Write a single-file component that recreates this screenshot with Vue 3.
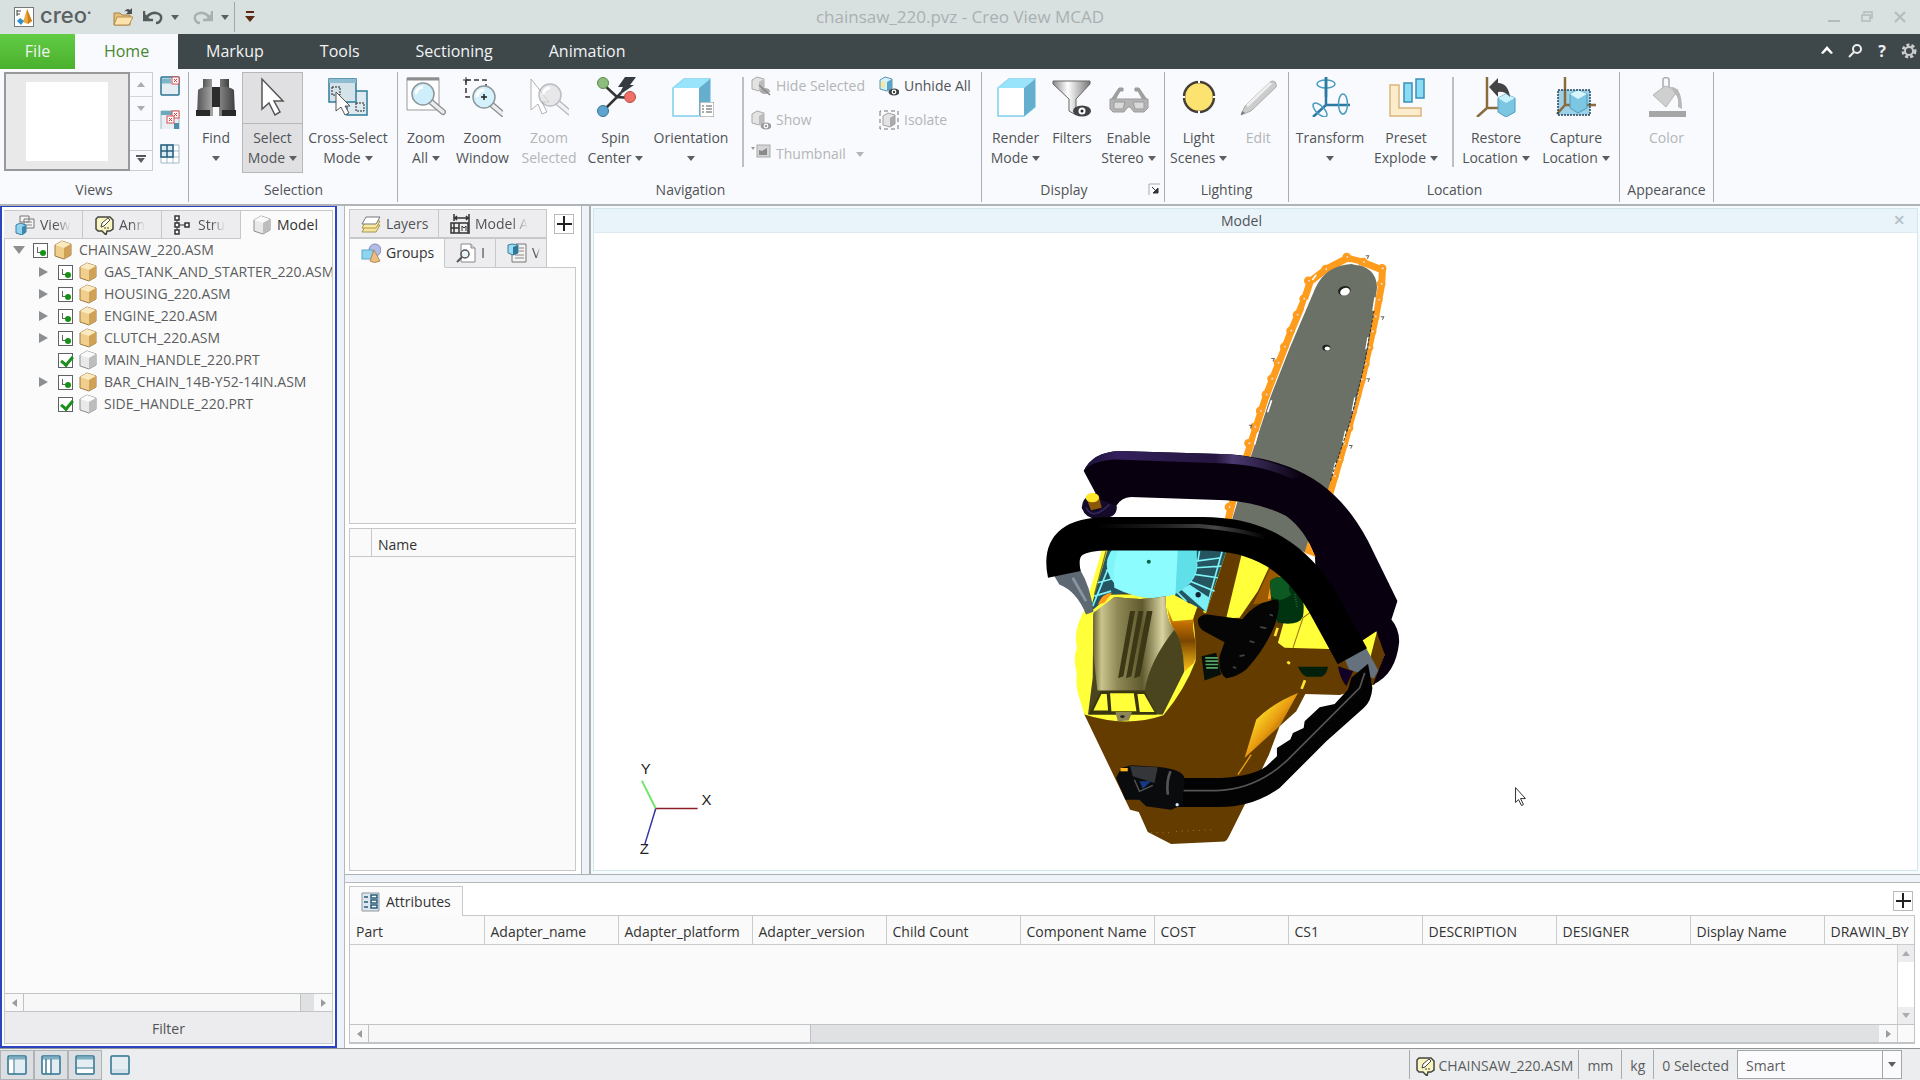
<script setup>
import { ref } from 'vue'

const lens = (x, y, r, fill) =>
  `<path d="M${x + r * 0.6} ${y + r * 0.6}L${x + r + 9} ${y + r + 7}" stroke="#8b8f93" stroke-width="6" stroke-linecap="round"/><path d="M${x + r * 0.7} ${y + r * 0.7}L${x + r + 9} ${y + r + 7}" stroke="#eceded" stroke-width="3.5" stroke-linecap="round"/><circle cx="${x}" cy="${y}" r="${r}" fill="${fill}" stroke="#8d979c" stroke-width="1.5"/><path d="M${x - r + 4} ${y}a${r - 4} ${r - 4} 0 0 1 ${r - 4} ${-r + 4}" stroke="#fff" stroke-width="3" fill="none"/>`
const eye = (c) => `<ellipse cx="15" cy="16" rx="5.5" ry="3.5" fill="${c}"/><circle cx="15" cy="16" r="2.4" fill="#fff"/><circle cx="15" cy="16" r="1.2" fill="${c}"/>`
const box = (a, b, c, s) =>
  `<path d="M2 5L9 1l9 3v11l-7 4-9-3z" fill="${a}" stroke="${s}"/><path d="M2 5l9 3 7-4-9-3z" fill="${b}"/><path d="M11 8l7-4v11l-7 4z" fill="${c}"/>`
const tinyBox = (a, c, s) =>
  `<path d="M1 4l5-3 7 2v9l-5 3-7-2z" fill="${a}" stroke="${s}"/><path d="M8 6l5-3v9l-5 3z" fill="${c}"/>`
const win = (inner) =>
  `<rect x="1" y="1" width="18" height="18" rx="1" fill="#e4edf2" stroke="#2b7391" stroke-width="1.5"/>${inner}`

const icons = {
  find: '<defs><linearGradient id="bn"><stop stop-color="#555"/><stop offset=".4" stop-color="#a5a5a5"/><stop offset="1" stop-color="#3f3f3f"/></linearGradient></defs><path d="M7 2h9v10H7zM24 2h9v10h-9z" fill="url(#bn)"/><path d="M2 13q5-4 15-3v29H1zM38 13q-5-4-15-3v29h16z" fill="url(#bn)"/><path d="M16 10h8v20h-8z" fill="#2c2c2c"/><path d="M0 33h14v6H0zM26 33h14v6H26z" fill="#292929"/>',
  select: '<path d="M9 2v30l7-6 6 12 5-3-6-11h9z" fill="#fff" stroke="#555" stroke-width="1.5"/>',
  cross: '<rect x="19" y="14" width="20" height="24" fill="#dfe9f0" stroke="#2e7c9a" stroke-width="1.5"/><rect x="1" y="2" width="27" height="23" fill="#d4e2ea" stroke="#2e7c9a" stroke-width="1.5"/><path d="M1 4h27" stroke="#8fbdd0" stroke-width="4"/><rect x="4" y="10" width="8" height="8" fill="none" stroke="#222" stroke-dasharray="2 1"/><rect x="28" y="26" width="8" height="8" fill="none" stroke="#222" stroke-dasharray="2 1"/><path d="M8 15v19l5-4 4 8 4-2-4-7h5z" fill="#fff" stroke="#555"/>',
  zoomAll: '<path d="M1 1h32v32H1z" fill="#fff" stroke="#999"/><path d="M1 2h32" stroke="#8d8d8d" stroke-width="3"/>' + lens(17, 17, 11, '#cdeefa'),
  zoomWindow: '<path d="M3 3h20v17M3 3v17h20" fill="none" stroke="#333" stroke-width="1.5" stroke-dasharray="5 3"/><path d="M0 3h6M3 0v6" stroke="#333"/>' + lens(21, 20, 11, '#d5f2fc') + '<path d="M18 20h6M21 17v6" stroke="#222" stroke-width="1.5"/>',
  zoomSelected: '<path d="M2 2v31l7-6 4 10 5-2-5-10h7z" fill="#fff" stroke="#b3b3b3"/><g opacity=".6">' + lens(21, 18, 11, '#dcdcdc') + '</g>',
  spin: '<path d="M7 7l14 13 14 1M21 20L7 34M21 20l4-4" stroke="#333" stroke-width="2.5" fill="none"/><circle cx="7" cy="6" r="5.5" fill="#8cbd7c" stroke="#5c8a4e"/><circle cx="7" cy="34" r="5.5" fill="#5fa3cf" stroke="#3b7499"/><circle cx="34" cy="20" r="5.5" fill="#ee7066" stroke="#b64c44"/><path d="M29 0h11l-6 8h4L22 19l5-9h-5z" fill="#333a40"/>',
  cube: '<path d="M2 11L13 2h26v28l-11 9H2z" fill="#fff" stroke="#7fd0ee" stroke-width="1.5"/><path d="M2 11L13 2h26l-11 9z" fill="#9ae4fb"/><path d="M28 11L39 2v28l-11 9z" fill="#65aecd"/>',
  filter: '<defs><linearGradient id="fn"><stop stop-color="#8a8a8a"/><stop offset=".4" stop-color="#fff"/><stop offset="1" stop-color="#777"/></linearGradient></defs><path d="M1 4h37v3L24 22v16l-7-4V22L1 7z" fill="url(#fn)" stroke="#666"/><ellipse cx="30" cy="34" rx="9" ry="5.5" fill="#3f4447"/><circle cx="30" cy="34" r="3.5" fill="#fff"/><circle cx="30" cy="34" r="1.5" fill="#222"/>',
  glasses: '<path d="M2 23L10 11h4v3h-3l-5 9M38 23l-8-12h-4v3h3l5 9" fill="#a0a0a0" stroke="#999"/><path d="M1 22h38v9l-4 4H25l-4-5h-2l-4 5H4l-3-3z" fill="#b4b4b4" stroke="#9b9b9b"/><path d="M5 25h11l-2 7H5zM24 25h11v7h-9z" fill="#d9d9d9" stroke="#999"/>',
  light: '<circle cx="20" cy="20" r="15" fill="#fce36f" stroke="#463f38" stroke-width="2.5"/><path d="M20 3v3M20 34v3M3 20h3M34 20h3" stroke="#fff" stroke-width="2"/>',
  pencil: '<path d="M3 38l4-9L32 5q3-2 5 0t1 5L13 34z" fill="#ccc" stroke="#aaa"/><path d="M9 29L33 6" stroke="#eee" stroke-width="3"/><path d="M3 38l1-4 3 2z" fill="#777"/>',
  transform: '<path d="M16 0v28h24M16 28L3 40" stroke="#2c7aa2" stroke-width="2.5" fill="none"/><ellipse cx="16" cy="7" rx="9" ry="4" fill="none" stroke="#4a9cc0" stroke-width="1.5"/><ellipse cx="33" cy="27" rx="4.5" ry="10" fill="none" stroke="#4a9cc0" stroke-width="1.5"/><ellipse cx="10" cy="33" rx="4" ry="9" transform="rotate(-45 10 33)" fill="none" stroke="#4a9cc0" stroke-width="1.5"/><path d="M16 0v20" stroke="#2c7aa2" stroke-width="2.5"/>',
  explode: '<path d="M4 8h9v23h22v8H4z" fill="#fdeccb" stroke="#dcb67c" stroke-width="1.5"/><path d="M18 6h8v19h-8zM30 2h8v19h-8z" fill="#8adcf5" stroke="#3d8fb5" stroke-width="1.5"/>',
  restore: '<path d="M11 0v31h20M11 31L1 40" stroke="#8b6b3c" stroke-width="2.5" fill="none"/><path d="M22 21l8-4 9 4v14l-9 5-8-5z" fill="#7cc6e2" stroke="#4b9cbd"/><path d="M22 21l8-4 9 4-9 5z" fill="#c9f1fc"/><path d="M13 10l9-9v5q10 0 12 14-5-6-12-5v5z" fill="#424446"/>',
  capture: '<path d="M2 13h32v25H2z" fill="#9dd1e8"/><path d="M9 0v28h31M9 28L1 37" stroke="#8b6b3c" stroke-width="2.5" fill="none"/><path d="M14 17l8-4 9 4v14l-9 5-8-5z" fill="#7cc6e2" stroke="#4b9cbd"/><path d="M14 17l8-4 9 4-9 5z" fill="#d7f6fe"/><path d="M2 13h32v25H2z" fill="none" stroke="#26465c" stroke-width="1.5" stroke-dasharray="2 1"/>',
  bucket: '<path d="M16 12V2q3-3 6 0v10" fill="none" stroke="#aaa" stroke-width="1.5"/><path d="M6 18L18 9l13 4-12 17z" fill="#cfcfcf" stroke="#b5b5b5"/><path d="M24 10q11 0 11 22l-4-2q1-10-3-13z" fill="#b8b8b8"/><path d="M2 34h37v6H2z" fill="#a6a6a6"/>',
  hide: tinyBox('#e3e3e3', '#bbb', '#a9a9a9') + '<ellipse cx="14" cy="15" rx="5" ry="3" fill="#aaa"/><path d="M8 9l11 10" stroke="#888" stroke-width="1.5"/>',
  show: tinyBox('#e3e3e3', '#bbb', '#a9a9a9') + eye('#999'),
  unhide: tinyBox('#d6f1fb', '#5aa5c6', '#5593ae') + '<path d="M2 5l4 1v6l-4-1z" fill="#f7e69b"/>' + eye('#3d4246'),
  isolate: '<path d="M1 4V1h18v18H1z" fill="none" stroke="#777" stroke-dasharray="4 3"/><path d="M4 6l5-3 7 2v9l-5 3-7-2z" fill="#e3e3e3" stroke="#a0a0a0"/><path d="M11 8l5-3v9l-5 3z" fill="#aaa"/>',
  thumb: '<path d="M0 3h4L2 6z" fill="#999"/><rect x="6" y="1" width="13" height="12" fill="#d5d5d5" stroke="#aaa"/><path d="M8 11V6l3 1 5-3v7z" fill="#8a8a8a"/>',
  winX: win('<path d="M2 5h9" stroke="#7fb5c9" stroke-width="5"/><rect x="12" y="1" width="7" height="7" fill="#fff" stroke="#d64d4d"/><path d="M14 3l3 3m0-3l-3 3" stroke="#d33"/>'),
  winXX: '<path d="M1 19V1h18v18" fill="#e8eef2" stroke="#9bbccb"/><path d="M1 3h11" stroke="#6da7bd" stroke-width="4"/><path d="M14 19v-6h5v6" fill="#4d8fa9"/><rect x="12" y="1" width="7" height="7" fill="#fff" stroke="#d64d4d"/><path d="M14 3l3 3m0-3l-3 3" stroke="#d33"/><rect x="7" y="6" width="7" height="7" fill="#fff" stroke="#d64d4d"/><path d="M9 8l3 3m0-3l-3 3" stroke="#d33"/>',
  grid: '<path d="M1 1h18v18H1zM1 13h18M13 1v18M7 1v18M1 7h18" fill="#fff" stroke="#9fb9c6"/><path d="M1 1h12v12H1zM7 1v12M1 7h12" fill="#d9eaf2" stroke="#245f7c" stroke-width="1.5"/>',
  views: '<path d="M5 1h9v6H5zM9 4h10v9H9z" fill="#f4f4f4" stroke="#777"/><path d="M11 7h6M11 10h6" stroke="#888"/><path d="M1 10l4-2 6 2v7l-4 3-6-2z" fill="#8fd3ee" stroke="#3e7c99"/><path d="M7 12l4-2v7l-4 3z" fill="#3c87ac"/>',
  note: '<path d="M4 2h12l3 3v9l-3 2h-3l-1 4-4-4H4l-2-2V4z" fill="#f8f5c2" stroke="#44463f" stroke-width="1.5"/><path d="M7 12l1-4 6-5 2 2-6 6z" fill="#fff" stroke="#44463f"/><path d="M10 13h6" stroke="#44463f" stroke-dasharray="2 1"/>',
  struct: '<path d="M4 3v14M4 10h11" stroke="#333"/><path d="M2 1h4v4H2zM2 8h4v4H2zM2 15h4v4H2zM12 8h4v4h-4z" fill="#fff" stroke="#333" stroke-width="1.5"/>',
  part: box('#e9e9e9', '#fafafa', '#bdbdbd', '#8d8d8d'),
  asm: box('#f0cf8c', '#fbe9c0', '#cfa257', '#9c7b45'),
  layers: '<path d="M1 18l4-7h14l-4 7z" fill="#f4e5a0" stroke="#a89255"/><path d="M1 14l4-7h14l-4 7z" fill="#f9eaa8" stroke="#b3993f"/><path d="M1 10l4-7h14l-4 7z" fill="#fff" stroke="#777"/>',
  dims: '<path d="M4 0v7M19 0v20M4 4h15M7 2L5 4l2 2M16 2l2 2-2 2" stroke="#333" stroke-width="1.5" fill="none"/><path d="M1 9h17v10H1zM9 9v10M1 14h8M4 9v10" fill="none" stroke="#333" stroke-width="1.5"/><path d="M12 17v-5l2 2 2-2v5" fill="none" stroke="#333"/>',
  groups: '<circle cx="14" cy="7" r="6" fill="#b4bce6" stroke="#7e87bd"/><rect x="1" y="7" width="11" height="9" fill="#8fd4ee" stroke="#5ca8c8"/><path d="M13 7l6 11q-6 3-10 0z" fill="#e9bd85" stroke="#b68b55"/>',
  inspect: '<path d="M5 1h10l4 4v14H5z" fill="#fff" stroke="#888"/><path d="M15 1v4h4" fill="#ddd" stroke="#888"/><circle cx="9" cy="11" r="4" fill="#e9f3f7" stroke="#555" stroke-width="1.5"/><path d="M6 14l-5 5" stroke="#555" stroke-width="2"/>',
  props: '<path d="M9 1h10v18H5v-8" fill="#f3f3f3" stroke="#777"/><path d="M12 5h5M12 8h5M8 12h9M8 15h9" stroke="#888"/><path d="M1 2l4-1 6 1v8l-5 2-5-2z" fill="#9adcf3" stroke="#3d7c98"/><path d="M6 4l5-2v8l-5 2z" fill="#2f7798"/>',
  attrs: '<path d="M1 1h17v18H1z" fill="#dfe7ec" stroke="#8b979e"/><path d="M3 5h4M3 10h4M3 15h4" stroke="#275d7c" stroke-width="1.5"/><path d="M10 3h6v3h-6zM10 8h6v3h-6zM10 13h6v3h-6z" fill="#fff" stroke="#275d7c" stroke-width="1.5"/>',
  layA: win('<path d="M2 3h16" stroke="#7eaec1" stroke-width="3"/><path d="M2 5h4v13H2z" fill="#fff"/><path d="M7 4v15" stroke="#3f7d97"/>'),
  layB: win('<path d="M2 3h16" stroke="#7eaec1" stroke-width="3"/><path d="M2 5h8v13H2z" fill="#fff"/><path d="M5 4v15M10 4v15" stroke="#3f7d97" stroke-width="1.5"/>'),
  layC: win('<path d="M2 3h16" stroke="#7eaec1" stroke-width="3"/><path d="M2 14h16v4H2z" fill="#fff"/><path d="M1 13h18" stroke="#3f7d97"/>'),
  layD: win('<path d="M2 14h16v4H2z" fill="#d3e1e9"/>'),
}

const tabs = ['Markup', 'Tools', 'Sectioning', 'Animation']
const selection = [
  { icon: 'find', l1: 'Find', l2: '', caret: true, size: 'xs' },
  { icon: 'select', l1: 'Select', l2: 'Mode', caret: true, size: 'md', on: true },
  { icon: 'cross', l1: 'Cross-Select', l2: 'Mode', caret: true, size: 'xl' },
]
const navigation = [
  { icon: 'zoomAll', l1: 'Zoom', l2: 'All', caret: true, size: 'xs' },
  { icon: 'zoomWindow', l1: 'Zoom', l2: 'Window', size: 'md' },
  { icon: 'zoomSelected', l1: 'Zoom', l2: 'Selected', size: 'lg', off: true },
  { icon: 'spin', l1: 'Spin', l2: 'Center', caret: true, size: 'md' },
  { icon: 'cube', l1: 'Orientation', l2: '', caret: true, size: 'xl', list: true },
]
const display = [
  { icon: 'cube', l1: 'Render', l2: 'Mode', caret: true, size: 'md' },
  { icon: 'filter', l1: 'Filters', l2: '', size: 'xs' },
  { icon: 'glasses', l1: 'Enable', l2: 'Stereo', caret: true, size: 'md' },
]
const lighting = [
  { icon: 'light', l1: 'Light', l2: 'Scenes', caret: true, size: 'md' },
  { icon: 'pencil', l1: 'Edit', l2: '', size: 'md', off: true },
]
const locationA = [
  { icon: 'transform', l1: 'Transform', l2: '', caret: true, size: 'loc' },
  { icon: 'explode', l1: 'Preset', l2: 'Explode', caret: true, size: 'lg' },
]
const locationB = [
  { icon: 'restore', l1: 'Restore', l2: 'Location', caret: true, size: 'loc' },
  { icon: 'capture', l1: 'Capture', l2: 'Location', caret: true, size: 'loc' },
]
const appearance = [{ icon: 'bucket', l1: 'Color', l2: '', size: 'md', off: true }]
const ribbon = [
  { name: 'Selection', cls: 'g-selection', sets: [selection] },
  { name: 'Navigation', cls: 'g-navigation', sets: [navigation], vis: true },
  { name: 'Display', cls: 'g-display', sets: [display], launcher: true },
  { name: 'Lighting', cls: 'g-lighting', sets: [lighting] },
  { name: 'Location', cls: 'g-location', sets: [locationA, locationB] },
  { name: 'Appearance', cls: 'g-appearance', sets: [appearance] },
]
const visA = [
  { icon: 'hide', text: 'Hide Selected', off: true },
  { icon: 'show', text: 'Show', off: true },
  { icon: 'thumb', text: 'Thumbnail', off: true, caret: true },
]
const visB = [
  { icon: 'unhide', text: 'Unhide All' },
  { icon: 'isolate', text: 'Isolate', off: true },
]
const treeTabs = [
  { icon: 'views', text: 'View' },
  { icon: 'note', text: 'Ann' },
  { icon: 'struct', text: 'Stru' },
]
const tree = ref([
  { name: 'GAS_TANK_AND_STARTER_220.ASM', asm: true },
  { name: 'HOUSING_220.ASM', asm: true },
  { name: 'ENGINE_220.ASM', asm: true },
  { name: 'CLUTCH_220.ASM', asm: true },
  { name: 'MAIN_HANDLE_220.PRT', asm: false },
  { name: 'BAR_CHAIN_14B-Y52-14IN.ASM', asm: true },
  { name: 'SIDE_HANDLE_220.PRT', asm: false },
])
const columns = ['Part', 'Adapter_name', 'Adapter_platform', 'Adapter_version', 'Child Count', 'Component Name', 'COST', 'CS1', 'DESCRIPTION', 'DESIGNER', 'Display Name', 'DRAWIN_BY']
const pins = [
  [570, 798], [629, 607], [647, 558], [664, 510], [681, 461], [698, 414], [717, 366], [736, 318], [755, 270], [774, 222], [794, 174], [808, 120], [860, 85], [923, 49], [973, 64], [1029, 83], [1026, 129], [1018, 177], [1008, 227], [999, 272], [990, 320], [979, 369], [967, 416], [954, 464], [941, 512], [930, 561], [914, 609], [901, 656], [886, 705],
]
const links = [[700, 358], [633, 558], [983, 50], [1028, 233], [985, 419], [933, 619]]
</script>

<template>
  <div class="app">
    <header class="titlebar">
      <div class="quick">
        <svg class="i20" viewBox="0 0 20 20"><path d="M0 0h20v20H0z" fill="#777" /><path d="M1 1h18v18H1z" fill="#fff" /><path d="M9 15l4-13 5 12-4 3z" fill="#f0a93a" /><path d="M13 2l5 12-4 3z" fill="#c87f1c" /><path d="M3 3v6M3 4h4M3 7h3" stroke="#444" /><path d="M3 14l3-3 4 3-3 4z" fill="#2f8fd0" /></svg>
        <span class="brand">creo<sup>•</sup></span>
        <button class="plain openfile" aria-label="Open"><svg class="i20" viewBox="0 0 20 20"><path d="M1 18V6h6l2 2h8v10z" fill="#e3c07c" stroke="#a58244" /><path d="M1 18l3-8h16l-4 8z" fill="#fbe3ae" stroke="#b58e4d" /><path d="M11 5q3-5 6-2l2-2v6h-6l2-2q-2-2-4 0z" fill="#4a5052" /></svg></button>
        <button class="plain" aria-label="Undo"><svg class="i20" viewBox="0 0 20 20"><path d="M1 4v9h9M2 12Q7 5 13 6q6 1 5 6-1 4-5 4" fill="none" stroke="#555c5e" stroke-width="2.5" /><path d="M1 6v8h8z" fill="#555c5e" /></svg></button>
        <i class="caret"></i>
        <button class="plain redo" aria-label="Redo"><svg class="i20" viewBox="0 0 20 20"><path d="M19 4v9h-9M18 12Q13 5 7 6q-6 1-5 6 1 4 5 4" fill="none" stroke="#a9b0b1" stroke-width="2.5" /><path d="M19 6v8h-8z" fill="#a9b0b1" /></svg></button>
        <i class="caret"></i>
        <i class="bar"></i>
        <button class="plain" aria-label="Customize"><svg class="i10" viewBox="0 0 10 12"><path d="M1 1h8" stroke="#5b2a12" stroke-width="2" /><path d="M0 5h10L5 11z" fill="#5b2a12" /></svg></button>
      </div>
      <h1>chainsaw_220.pvz - Creo View MCAD</h1>
      <div class="winbtns">
        <button class="plain" aria-label="Minimize"><svg viewBox="0 0 12 12"><path d="M0 10h12" stroke="#b3bcbc" stroke-width="2" /></svg></button>
        <button class="plain" aria-label="Restore window"><svg viewBox="0 0 12 12"><path d="M3 3V1h8v6H9M1 4h8v6H1z" fill="none" stroke="#b3bcbc" stroke-width="1.5" /></svg></button>
        <button class="plain" aria-label="Close"><svg viewBox="0 0 12 12"><path d="M1 1l10 10M11 1L1 11" stroke="#b3bcbc" stroke-width="2" /></svg></button>
      </div>
    </header>

    <nav class="tabbar">
      <button class="file">File</button>
      <button class="home">Home</button>
      <button v-for="t in tabs" :key="t">{{ t }}</button>
      <div class="tools">
        <svg viewBox="0 0 16 16"><path d="M2 10l6-7 6 7-2 1-4-4-4 4z" fill="#fff" /></svg>
        <svg viewBox="0 0 16 16"><circle cx="10" cy="6" r="4" fill="none" stroke="#eee" stroke-width="2" /><path d="M7 9l-5 5" stroke="#eee" stroke-width="2" /></svg>
        <b>?</b>
        <svg viewBox="0 0 16 16"><circle cx="8" cy="8" r="6" fill="none" stroke="#ccc" stroke-width="3" stroke-dasharray="3 2" /><circle cx="8" cy="8" r="4" fill="none" stroke="#ccc" stroke-width="2" /></svg>
      </div>
    </nav>

    <section class="ribbon">
      <div class="group g-views">
        <div class="content">
          <div class="gallery">
            <div class="shot"><i></i></div>
            <div class="spin">
              <button aria-label="Up"><i class="caret up dim"></i></button>
              <button aria-label="Down"><i class="caret dim"></i></button>
              <span></span>
              <button aria-label="More"><i class="caret more"></i></button>
            </div>
          </div>
          <div class="viewicons">
            <svg v-for="n in ['winX', 'winXX', 'grid']" :key="n" class="i20" viewBox="0 0 20 20" v-html="icons[n]"></svg>
          </div>
        </div>
        <div class="gname">Views</div>
      </div>
      <div v-for="g in ribbon" :key="g.name" class="group" :class="g.cls">
        <div class="content">
          <template v-for="(set, si) in g.sets" :key="si">
            <i v-if="si" class="vsep"></i>
            <button v-for="b in set" :key="b.l1 + b.l2" class="big" :class="[b.size, { off: b.off, on: b.on }]">
              <span class="pic">
                <svg class="i40" viewBox="0 0 40 40" v-html="icons[b.icon]"></svg>
                <svg v-if="b.list" class="list" viewBox="0 0 14 15"><path d="M0 0h14v15H0z" fill="#fff" stroke="#888" /><path d="M2 4h2M6 4h6M2 7h2M6 7h6M2 10h2M6 10h6" stroke="#555" /></svg>
              </span>
              <span class="cap"><span>{{ b.l1 }}</span><span class="l2">{{ b.l2 }}<i v-if="b.caret" class="caret"></i></span></span>
            </button>
          </template>
          <template v-if="g.vis">
            <i class="vsep"></i>
            <div class="vis">
              <div v-for="(col, ci) in [visA, visB]" :key="ci" class="viscol">
                <button v-for="v in col" :key="v.text" class="small" :class="{ off: v.off }">
                  <svg class="i20" viewBox="0 0 20 20" v-html="icons[v.icon]"></svg>{{ v.text }}<i v-if="v.caret" class="caret"></i>
                </button>
              </div>
            </div>
          </template>
        </div>
        <div class="gname">{{ g.name }}
          <svg v-if="g.launcher" class="launcher" viewBox="0 0 12 12"><path d="M1 12V1h11" fill="none" stroke="#aaa" /><path d="M4 4l5 5M10 5v5H5z" stroke="#333" fill="#333" /></svg>
        </div>
      </div>
    </section>

    <main>
      <aside class="treepane">
        <div class="tabs">
          <button v-for="t in treeTabs" :key="t.text" class="tab t80"><svg class="i20" viewBox="0 0 20 20" v-html="icons[t.icon]"></svg><span class="fade">{{ t.text }}</span></button>
          <button class="tab active grow"><svg class="i20" viewBox="0 0 20 20" v-html="icons.part"></svg><span>Model</span></button>
        </div>
        <div class="treebody">
          <ul>
            <li class="root">
              <i class="tw expanded"></i>
              <label><input type="checkbox" class="part-on"><svg class="i20" viewBox="0 0 20 20" v-html="icons.asm"></svg>CHAINSAW_220.ASM</label>
            </li>
            <li v-for="n in tree" :key="n.name">
              <i class="tw" :class="{ none: !n.asm }"></i>
              <label><input type="checkbox" :class="{ 'part-on': n.asm }" :checked="!n.asm"><svg class="i20" viewBox="0 0 20 20" v-html="n.asm ? icons.asm : icons.part"></svg>{{ n.name }}</label>
            </li>
          </ul>
          <div class="hscroll"><button aria-label="Scroll left"><i class="lt"></i></button><span class="thumb"></span><span class="track"></span><button aria-label="Scroll right"><i class="rt"></i></button></div>
          <button class="filter">Filter</button>
        </div>
      </aside>

      <div class="work">
        <div class="upper">
          <section class="groups">
            <div class="ghead">
              <div class="gtabs">
                <div class="tabs">
                  <button class="tab t90"><svg class="i20" viewBox="0 0 20 20" v-html="icons.layers"></svg><span>Layers</span></button>
                  <button class="tab grow"><svg class="i20" viewBox="0 0 20 20" v-html="icons.dims"></svg><span class="fade late">Model A</span></button>
                </div>
                <div class="tabs">
                  <button class="tab active grow"><svg class="i20" viewBox="0 0 20 20" v-html="icons.groups"></svg><span>Groups</span></button>
                  <button class="tab t50"><svg class="i20" viewBox="0 0 20 20" v-html="icons.inspect"></svg><span>I</span></button>
                  <button class="tab t50"><svg class="i20" viewBox="0 0 20 20" v-html="icons.props"></svg><span class="fade">V</span></button>
                </div>
              </div>
              <div class="gadd"><button class="plus" aria-label="Add tab"></button></div>
            </div>
            <div class="gbody"></div>
            <table class="names"><thead><tr><th class="nar"></th><th>Name</th></tr></thead></table>
            <div class="nbody"></div>
          </section>
          <section class="model">
            <div class="inner">
              <h2>Model<button class="plain x" aria-label="Close view">×</button></h2>
              <div class="canvas">
                <svg viewBox="0 0 1328 638" preserveAspectRatio="xMidYMid meet">
                  <defs>
                    <linearGradient id="tan"><stop stop-color="#6b6538" /><stop offset=".1" stop-color="#c9c48c" /><stop offset=".3" stop-color="#8f8856" /><stop offset=".6" stop-color="#5f592e" /><stop offset=".85" stop-color="#d8d3a0" /><stop offset="1" stop-color="#8b8552" /></linearGradient>
                    <linearGradient id="org" x1="0" y1="0" x2="0" y2="1"><stop stop-color="#ffea30" /><stop offset=".3" stop-color="#c06c00" /><stop offset=".55" stop-color="#7a4600" /><stop offset="1" stop-color="#ffc21a" /></linearGradient>
                    <linearGradient id="fold" x1="0" y1="0" x2="1" y2="1"><stop offset=".2" stop-color="#fff22e" /><stop offset=".5" stop-color="#e89a10" /><stop offset=".8" stop-color="#643c00" /></linearGradient>
                    <linearGradient id="hl"><stop stop-color="#000" /><stop offset=".4" stop-color="#333" /><stop offset=".7" stop-color="#777" /><stop offset="1" stop-color="#000" /></linearGradient>
                    <linearGradient id="vio"><stop stop-color="#1b1033" /><stop offset=".15" stop-color="#33205c" /><stop offset=".6" stop-color="#24163f" /><stop offset=".68" stop-color="#4a3a70" /><stop offset="1" stop-color="#08000f" /></linearGradient>
                  </defs>
                  <g transform="translate(447 7) scale(0.33500)">
                    <path d="M566 835L590 740 625 635 681 461 755 270 795 174 812 122 860 85 923 52 973 66 1028 88 1026 130 1008 227 967 416 914 609 886 705 870 760" fill="none" stroke="#ff9c1c" stroke-width="21" stroke-linejoin="round" />
                    <g v-for="(p, i) in pins" :key="i"><circle :cx="p[0] - 2" :cy="p[1]" r="13" fill="#ff9c1c" /><circle :cx="p[0]" :cy="p[1]" r="4" fill="#ffe0b4" stroke="#c8720a" /></g>
                    <path v-for="(p, i) in links" :key="'l' + i" :d="`M${p[0] - 5} ${p[1] - 5}h9l-4 9`" fill="none" stroke="#666" stroke-width="3" />
                    <path d="M577 838L636 640 694 465 752 318 828 140Q860 74 935 70 1010 76 1012 140L985 320 945 500 866 742 798 935Z" fill="#6b7166" />
                    <path d="M795 205l9-28M818 118l12-16M696 478l-12 36M655 575l-10 36M932 66l24 6M1006 170l-6 40M985 290l-6 36M946 470l-8 40M918 570l-8 36M888 665l-8 34" stroke="#fff" stroke-width="5" />
                    <path d="M1003 210L972 380 932 540 872 720" fill="none" stroke="#30342e" stroke-width="3" stroke-dasharray="9 5" />
                    <ellipse cx="914" cy="150" rx="19" ry="14" fill="#1d201c" transform="rotate(-12 914 150)" /><ellipse cx="916" cy="153" rx="15" ry="11" fill="#fff" transform="rotate(-20 916 153)" />
                    <ellipse cx="860" cy="321" rx="12" ry="9" fill="#1d201c" /><ellipse cx="863" cy="323" rx="8" ry="6" fill="#fff" />
                    <g transform="translate(0 900)">
                      <path d="M135 520L272 805 298 812 325 872 395 908 555 900Q563 897 568 885L618 785 688 640 720 555 770 510 797 458 900 461 1005 430 1040 325 1010 270 960 272 780 80 560 10 195 10 140 210 120 320Z" fill="#643c00" />
                      <path d="M190 20L145 170 170 190 215 20Z" fill="#ffff3a" /><path d="M200 30L160 180" stroke="#8a7a10" stroke-width="4" />
                      <path d="M133 210Q100 275 113 318 100 350 112 395 108 440 120 470L135 520Q260 560 372 522 436 445 468 360 472 210 430 160L160 160Z" fill="#ffff3a" />
                      <path d="M384 200Q400 180 476 190 455 225 462 270 476 330 464 365L434 392Q430 300 405 270 385 235 384 200Z" fill="url(#org)" /><path d="M384 200Q400 180 476 190L460 235 400 240Z" fill="#ffff3a" />
                      <path d="M606 40L690 75 655 150 600 230 560 231Z" fill="#ffff3a" />
                      <path d="M556 30L495 215" stroke="#ffe92a" stroke-width="9" />
                      <path d="M735 130L800 150 920 325 735 320 715 305 732 245Z" fill="#ffff3a" />
                      <path d="M965 270H1012L988 365 960 330Z" fill="#ffff3a" />
                      <path d="M760 320L790 230 830 200" stroke="#a26a0a" stroke-width="3" fill="none" />
                      <path d="M640 190L690 85Q740 65 760 115L700 180Z" fill="#9b5900" /><path d="M685 175Q690 110 735 100L720 115 698 170Z" fill="#ff9a1c" />
                      <path d="M706 285l8-25M786 443l10-26M743 362l8 5" stroke="#ffe92a" stroke-width="8" />
                      <path d="M775 377H865Q862 400 845 407H800Q785 400 775 377Z" fill="#00200c" />
                      <path d="M775 455Q700 485 650 535L615 650Q680 590 720 555Z" fill="url(#fold)" /><path d="M635 640L595 700" stroke="#e4a51b" stroke-width="4" />
                      <path d="M335 874H400M410 870L520 865" stroke="#d09228" stroke-width="2" stroke-dasharray="3 14" />
                      <path d="M205 25H562L500 212 430 175 380 150 215 160 150 215Z" fill="#255560" />
                      <path d="M160 195L205 85M205 60L240 35M175 125L230 110M470 60L545 50M470 80L545 75M465 100L535 110M450 120L525 150M480 30L475 60M200 90L235 65M410 150L440 180M165 165L215 150M430 135L500 200M548 30L498 210" stroke="#7ef3f7" stroke-width="5" />
                      <path d="M425 145L450 130 510 170 500 212Z" fill="#7ceef5" /><circle cx="476" cy="161" r="8" fill="#123" />
                      <path d="M384 182L405 155 412 184Z" fill="#ffff3a" />
                      <path d="M175 190Q190 155 218 155L195 185Z" fill="#ff9a1c" />
                      <ellipse cx="338" cy="72" rx="136" ry="99" fill="#7ff5fa" /><path d="M225 140Q215 60 250 0H420L408 160Q310 185 225 140Z" fill="#8dfcff" /><path d="M415 20L408 158Q460 130 472 80V20Z" fill="#5fdfe8" /><circle cx="328" cy="62" r="6" fill="#064" />
                      <path d="M225 168Q320 180 378 165 378 240 405 268 432 300 434 392L370 520H146L160 410 162 220Z" fill="#4a451f" />
                      <path d="M225 168Q320 180 378 165 378 235 405 265 330 360 316 446L174 448 162 340 162 215Z" fill="url(#tan)" />
                      <path d="M272 210h15L252 405l-16 6zM297 210h15L276 405l-16 6zM322 210h17L302 405l-18 6z" fill="#3c3816" />
                      <path d="M184 450H316L352 520H148Z" fill="#39360f" /><path d="M186 458H202L206 508H162ZM212 456H283L291 510H216ZM294 458H314L345 512H301Z" fill="#ffff3a" />
                      <path d="M228 512H278L268 538 235 540Z" fill="#8c8656" /><ellipse cx="249" cy="526" rx="7" ry="4" fill="#222" />
                      <path d="M486 345L530 335 545 400 495 418Z" fill="#07100a" /><path d="M497 350h38M498 360h38M498 370h38M500 380h35" stroke="#55a866" stroke-width="5" />
                      <path d="M692 120Q720 95 765 120 800 160 790 225 780 255 715 245 690 190 692 120Z" fill="#00330f" /><path d="M692 120Q720 95 757 118 740 140 755 160 720 190 694 165Z" fill="#0c5a22" /><path d="M765 160l8 38" stroke="#3a7048" stroke-width="6" stroke-dasharray="2 5" />
                      <path d="M475 235Q485 215 520 222L608 234Q650 180 714 175 724 190 708 245 680 320 620 385 590 408 560 411 535 395 540 345L555 303 490 268Q474 255 475 235Z" fill="#050505" />
                      <path d="M600 345l15-3M630 300l15 4M662 258l18 3M690 220l10 4M580 378l10 2" stroke="#444" stroke-width="5" />
                    </g>
                    <path d="M133 690Q160 633 240 630L570 640Q770 655 883 762 940 815 985 900L1073 1080 1055 1135Q1080 1165 1078 1205 1068 1300 1000 1330L1035 1240 1010 1170 965 1200 900 1180 830 1040 826 948Q800 870 740 825 660 785 560 778L275 768Q245 770 230 795L205 830 150 800 168 755Z" fill="#08000f" />
                    <path d="M133 690Q160 633 240 630L570 640Q680 650 790 700L760 715Q680 675 560 668L230 656Q160 658 133 690Z" fill="url(#vio)" />
                    <path d="M895 1275L940 1290 920 1335Q900 1310 895 1275Z" fill="#120026" />
                    <path d="M127 800Q130 770 150 765L210 785 232 795Q235 830 190 832 140 840 127 800Z" fill="#140b29" /><path d="M140 800Q160 840 210 790" fill="none" stroke="#37255c" stroke-width="5" /><path d="M142 775L155 808 187 800 178 765Z" fill="#8a5608" /><ellipse cx="159" cy="770" rx="20" ry="14" fill="#ffe52c" />
                    <path d="M42 1000L122 985Q155 1040 162 1112L140 1120Q112 1050 60 1030Z" fill="#5e6873" /><path d="M100 1010l40 70" stroke="#8995a2" stroke-width="8" />
                    <path d="M905 1230L968 1200 1016 1288 1002 1312 928 1284Z" fill="#65717c" />
                    <path d="M75 1000C55 905 110 878 210 878H490C660 878 770 950 850 1085L938 1245" fill="none" stroke="#000" stroke-width="100" /><path d="M170 855H480Q600 865 680 890" fill="none" stroke="url(#hl)" stroke-width="12" opacity=".6" />
                    <path d="M795 935L805 900 828 948Z" fill="#ff9c1c" />
                    <path d="M985 1268L998 1340Q995 1380 972 1400L860 1500 720 1640Q640 1697 540 1697H400L395 1610H545Q640 1605 680 1575L712 1545V1520L752 1495 760 1475 792 1460 795 1440 840 1398 885 1388 925 1345 935 1310Z" fill="#030303" />
                    <path d="M975 1295L960 1340 745 1555Q650 1645 530 1648H395" fill="none" stroke="#555" stroke-width="5" />
                    <path d="M230 1610L245 1580 275 1572 360 1577Q430 1585 435 1610L430 1690 395 1705 320 1695 300 1675 258 1675Z" fill="#0a0b0d" /><path d="M272 1574L355 1578 345 1625 280 1605Z" fill="#34363a" /><path d="M300 1620l35 0-25 22z" fill="#183a86" /><path d="M243 1580h22v10h-22z" fill="#ffb21c" /><path d="M393 1590Q380 1620 385 1660" stroke="#555" stroke-width="8" fill="none" /><path d="M285 1615l15 35 40-18" stroke="#555" stroke-width="4" fill="none" /><circle cx="413" cy="1690" r="5" fill="#d7e6ff" />
                  </g>
                  <g fill="none"><path d="M62 577H104" stroke="#8b1d2b" stroke-width="1.5" /><path d="M62 577L48 549" stroke="#6ee86e" stroke-width="2" /><path d="M62 577L51 613" stroke="#3535a0" stroke-width="1.5" /></g>
                  <g class="axes"><text x="47" y="542">Y</text><text x="108" y="573">X</text><text x="46" y="623">Z</text></g>
                  <path d="M925 556v15l3-3 3 6 2-1-3-6h5z" fill="#fff" stroke="#333" />
                </svg>
              </div>
            </div>
          </section>
        </div>

        <section class="attrs">
          <div class="ahead">
            <button class="tab active"><svg class="i20" viewBox="0 0 20 20" v-html="icons.attrs"></svg><span>Attributes</span></button>
            <button class="plus" aria-label="Add tab"></button>
          </div>
          <div class="atable">
            <table><thead><tr><th v-for="c in columns" :key="c">{{ c }}</th></tr></thead></table>
            <div class="vwrap"><div class="vscroll"><button aria-label="Scroll up"><i class="caret up dim"></i></button><span></span><button aria-label="Scroll down"><i class="caret dim"></i></button></div></div>
            <div class="hscroll wide"><button aria-label="Scroll left"><i class="lt"></i></button><span class="thumb"></span><span class="track"></span><button aria-label="Scroll right"><i class="rt"></i></button><span class="corner"></span></div>
          </div>
        </section>
      </div>
    </main>

    <footer>
      <button v-for="n in ['layA', 'layB', 'layC']" :key="n" class="lay on" :aria-label="n"><svg class="i20" viewBox="0 0 20 20" v-html="icons[n]"></svg></button>
      <button class="lay" aria-label="Single pane"><svg class="i20" viewBox="0 0 20 20" v-html="icons.layD"></svg></button>
      <div class="status">
        <span class="doc"><svg class="i20" viewBox="0 0 20 20" v-html="icons.note"></svg>CHAINSAW_220.ASM</span>
        <span>mm</span><span>kg</span><span>0 Selected</span>
        <div class="pick"><select aria-label="Selection filter"><option>Smart</option></select><i class="caret"></i></div>
      </div>
    </footer>
  </div>
</template>

<style>
body { margin: 0; }
</style>

<style scoped>
* { box-sizing: border-box; }
.app { min-height: 100vh; display: flex; flex-direction: column; background: #f0f1f2; color: #505356; font: 14px/20px "Open Sans", "Noto Sans", sans-serif; }
button { font: inherit; color: inherit; background: none; border: 0; padding: 0; margin: 0; }
.plain { display: flex; align-items: center; justify-content: center; }
svg { display: block; flex: none; }
.i20 { width: 20px; height: 20px; }
.i40 { width: 40px; height: 40px; }
.i10 { width: 10px; height: 12px; }
.caret { display: inline-block; flex: none; width: 0; height: 0; border: 4px solid transparent; border-top: 5px solid #5c5f62; border-bottom: 0; }
.caret.up { border-top: 0; border-bottom: 5px solid #5c5f62; }
.caret.dim { border-top-color: #aaadb0; }
.caret.up.dim { border-bottom-color: #aaadb0; }

.titlebar { height: 34px; display: grid; grid-template-columns: 1fr auto 1fr; align-items: center; background: #d9e0e0; }
.quick { display: flex; align-items: center; padding-left: 14px; }
.brand { font: 500 22px/20px Inter, sans-serif; color: #596163; margin: 0 0 4px 6px; width: 51px; white-space: nowrap; }
.brand sup { font-size: 8px; line-height: 8px; }
.openfile { margin: 0 10px 0 22px; }
.quick > .caret { margin: 0 0 0 8px; }
.redo { margin-left: 14px; }
.bar { width: 1px; height: 30px; background: #a0a8a8; margin: 0 10px 0 5px; }
h1 { margin: 0; font: 17px/24px "Open Sans", sans-serif; color: #a8b1b1; }
.winbtns { justify-self: end; display: flex; gap: 21px; padding-right: 14px; }
.winbtns svg { width: 12px; height: 12px; }

.tabbar { height: 35px; display: flex; background: #3e474a; font-size: 16px; }
.tabbar button { padding: 0 28px 1px; color: #f1f3f4; }
.tabbar .file { width: 75px; padding: 0 0 1px; background: linear-gradient(#62cc45, #4ab02d); }
.tabbar .home { width: 103px; padding: 0 0 1px; background: #f9fafd; color: #48862f; }
.tools { margin-left: auto; display: flex; align-items: center; gap: 12px; padding: 0 3px 2px 0; color: #eee; }
.tools svg { width: 16px; height: 16px; }
.tools b { width: 14px; text-align: center; }

.ribbon { height: 137px; display: flex; background: #f9fafd; border-bottom: 2px solid #b0b4b7; }
.group { display: flex; flex-direction: column; margin: 3px 0 2px; border-right: 1px solid #a9adb0; }
.content { flex: 1; display: flex; align-items: flex-start; }
.gname { position: relative; height: 26px; line-height: 28px; text-align: center; }
.launcher { position: absolute; right: 4px; top: 7px; width: 12px; height: 12px; }
.g-views { width: 189px; }
.g-selection { width: 209px; padding-left: 1px; }
.g-navigation { width: 584px; padding-left: 2px; }
.g-display { width: 183px; }
.g-display .content { padding-left: 3px; }
.g-display .gname { padding-right: 18px; }
.g-lighting { width: 124px; }
.g-lighting .content { padding-left: 4px; }
.g-location { width: 331px; padding-left: 1px; }
.g-location .vsep { margin: 5px 2px 0 10px; }
.g-appearance { width: 94px; }
.g-appearance .content { justify-content: center; }
.big { height: 101px; display: flex; flex-direction: column; align-items: center; border: 1px solid transparent; }
.big.xs { width: 52px; }
.big.md { width: 61px; }
.big.lg { width: 72px; }
.big.loc { width: 80px; }
.big.xl { width: 90px; }
.pic { position: relative; height: 50px; padding-top: 4px; }
.list { position: absolute; right: -3px; bottom: 6px; width: 14px; height: 15px; }
.cap { width: 100%; display: flex; flex-direction: column; align-items: center; line-height: 20px; padding-top: 5px; white-space: nowrap; }
.l2 { display: flex; align-items: center; gap: 4px; height: 20px; }
.on.big { background: #e0e0e2; border-color: #b5b7b9; }
.on .cap { border-top: 1px solid #b5b7b9; flex: 1; padding-top: 4px; }
.off { color: #b3b5b7; }
.off .caret { border-top-color: #b3b5b7; }
.vsep { flex: none; width: 2px; height: 90px; margin: 5px 7px 0 6px; background: #bdc0c3; }
.vis { display: flex; gap: 14px; }
.viscol { display: flex; flex-direction: column; padding-top: 4px; gap: 14px; }
.small { height: 20px; display: flex; align-items: center; gap: 5px; white-space: nowrap; }
.small .caret { margin-left: 5px; }
.gallery { display: flex; margin: 0 0 0 4px; height: 99px; }
.shot { width: 126px; padding: 8px 20px; background: #e9e9ea; border: 2px solid #98999a; display: flex; }
.shot i { flex: 1; background: #fff; }
.spin { width: 23px; display: flex; flex-direction: column; border: 1px solid #ccced1; border-left: 0; }
.spin button { height: 24px; display: flex; align-items: center; justify-content: center; border-bottom: 1px solid #d3d5d8; }
.spin span { flex: 1; }
.spin button:last-child { height: 20px; border-top: 1px solid #ccc; border-bottom: 0; }
.more { position: relative; }
.more::before { content: ""; position: absolute; left: -5px; top: -8px; width: 10px; height: 2px; background: #55585a; }
.viewicons { display: flex; flex-direction: column; gap: 14px; padding: 4px 0 0 7px; }

main { flex: 1; display: flex; min-height: 0; background: #edf3f9; }
.treepane { width: 337px; display: flex; flex-direction: column; border: 2px solid #2c44c0; border-top-width: 1px; background: #fff; padding: 3px 2px 2px; }
.tabs { display: flex; height: 29px; border-top: 1px solid #c6c8ca; }
.tab { display: flex; align-items: center; gap: 5px; overflow: hidden; white-space: nowrap; background: #ededf0; border: 0 solid #c6c8ca; border-width: 0 1px 1px 0; padding: 0 0 0 11px; }
.tab.active { background: #fbfbfb; border-bottom-color: #fbfbfb; color: #333; }
.t80 { width: 79px; }
.t90 { width: 89px; }
.t50 { width: 51px; }
.grow { flex: 1; min-width: 0; }
.fade { mask-image: linear-gradient(90deg, #000 50%, transparent); }
.late { mask-image: linear-gradient(90deg, #000 70%, transparent); }
.treebody { flex: 1; display: flex; flex-direction: column; border: 1px solid #c6c8ca; border-top: 0; background: #fbfbfb; min-width: 0; }
ul { flex: 1; list-style: none; margin: 0; padding: 0; overflow: hidden; }
li { display: flex; align-items: center; height: 22px; padding-left: 34px; white-space: nowrap; color: #5b5d5f; }
li.root { padding-left: 8px; }
li label { display: flex; align-items: center; }
li label svg { margin: 0 6px 0 5px; }
.tw { flex: none; width: 9px; height: 0; margin-right: 10px; border: 5px solid transparent; border-left: 9px solid #8c8f91; border-right: 0; }
.tw.expanded { width: 12px; border: 6px solid transparent; border-top: 8px solid #8c8f91; border-bottom: 0; }
.root .tw { margin-right: 8px; }
.tw.none { visibility: hidden; }
input { appearance: none; position: relative; width: 15px; height: 15px; margin: 0; border: 1px solid #5f6264; background: #fff; }
input:checked::before { content: ""; position: absolute; left: 4px; top: 0; width: 5px; height: 9px; border: solid #1d8f1d; border-width: 0 3px 3px 0; transform: rotate(40deg); }
.part-on::before { content: ""; position: absolute; left: 3px; top: 3px; width: 3px; height: 5px; border: solid #666; border-width: 0 0 1px 1px; }
.part-on::after { content: ""; position: absolute; left: 6px; top: 6px; width: 6px; height: 6px; border-radius: 50%; background: #169016; }
.hscroll { flex: none; height: 19px; display: flex; border-top: 1px solid #c2c5c7; border-bottom: 1px solid #c2c5c7; background: #dfe1e2; }
.hscroll button { width: 18px; display: flex; align-items: center; justify-content: center; background: #f8f8f8; }
.lt { border: 4px solid transparent; border-right: 5px solid #9a9da0; border-left: 0; }
.rt { border: 4px solid transparent; border-left: 5px solid #9a9da0; border-right: 0; }
.thumb { flex: 278; background: #f7f7f7; border: solid #bfc2c4; border-width: 0 1px; }
.track { flex: 13; }
.filter { height: 31px; padding-top: 2px; background: #ececee; }

.work { flex: 1; min-width: 0; display: flex; flex-direction: column; margin-left: 7px; border-left: 1px solid #b4b8bb; }
.upper { flex: 1; min-height: 0; display: flex; gap: 7px; border-bottom: 1px solid #aab0b4; }
.groups { width: 237px; display: flex; flex-direction: column; background: #fff; border-right: 1px solid #b4b8bb; padding: 3px 5px 3px 4px; }
.ghead { display: flex; }
.gtabs { width: 198px; border-left: 1px solid #c6c8ca; }
.gtabs .tabs + .tabs { height: 30px; }
.gadd { flex: 1; border-bottom: 1px solid #c6c8ca; padding: 5px 0 0 7px; }
.plus { position: relative; width: 20px; height: 20px; border: 1px solid #b9bbbd; background: #fff; }
.plus::before, .plus::after { content: ""; position: absolute; background: #222; }
.plus::before { left: 2px; right: 1px; top: 8px; height: 2px; }
.plus::after { top: 1px; bottom: 2px; left: 8px; width: 2px; }
.gbody { flex: 256; background: #fafafa; border: 1px solid #c6c8ca; border-top: 0; }
table { border-collapse: collapse; }
th { font-weight: normal; text-align: left; }
.names { width: 100%; margin-top: 4px; background: #fafafa; border: 1px solid #c6c8ca; color: #333; }
.names th { height: 28px; padding: 5px 6px 0; border-right: 1px solid #c6c8ca; }
.names .nar { width: 22px; }
.nbody { flex: 314; background: #fafafa; border: 1px solid #c6c8ca; border-top: 0; }
.model { flex: 1; min-width: 0; display: flex; border-left: 2px solid #aab0b4; background: #f5fbfd; padding: 2px 2px 3px; }
.inner { flex: 1; min-width: 0; display: flex; flex-direction: column; border: 1px solid #d3e6ee; background: #fff; }
h2 { position: relative; margin: 0; height: 24px; padding-right: 28px; font: 14px/24px "Open Sans", sans-serif; text-align: center; background: #e9f4fa; border-bottom: 1px solid #dcebf1; }
.x { position: absolute; right: 12px; top: 0; height: 22px; font-size: 20px; font-weight: 600; color: #b4c0c8; }
.canvas { flex: 1; min-height: 0; position: relative; }
.canvas > svg { position: absolute; inset: 0; width: 100%; height: 100%; }
.axes { font: 15px "Liberation Sans", sans-serif; fill: #222; }

.attrs { flex: none; height: 166px; margin-top: 7px; display: flex; flex-direction: column; background: #fff; border-top: 1px solid #b4b8bb; padding: 3px 5px 4px 4px; color: #333; }
.ahead { height: 30px; display: flex; align-items: center; justify-content: space-between; padding-right: 2px; border-bottom: 1px solid #c6c8ca; }
.ahead .tab { height: 30px; width: 114px; padding-top: 1px; border-width: 1px 1px 0; }
.atable { flex: 1; min-height: 0; overflow: hidden; display: flex; flex-direction: column; border: 1px solid #c2c5c7; border-top: 0; background: #fafafa; }
.atable table { table-layout: fixed; width: 1608px; flex: none; }
.atable th { width: 134px; height: 28px; padding: 5px 6px 0; white-space: nowrap; border: solid #c9cbcd; border-width: 0 1px 1px 0; }
.vwrap { flex: 1; min-height: 0; display: flex; justify-content: flex-end; }
.vscroll { width: 17px; display: flex; flex-direction: column; border-left: 1px solid #cfd1d3; background: #fff; }
.vscroll button { height: 17px; display: flex; align-items: center; justify-content: center; background: #ededf0; }
.vscroll span { flex: 1; }
.wide .thumb { flex: 442; }
.wide .track { flex: 1071; }
.corner { width: 17px; background: #fafafa; border-left: 1px solid #c9cbcd; }

footer { height: 32px; display: flex; border-top: 1px solid #8f9497; background: #ebedee; font-size: 14px; }
.lay { width: 35px; margin-top: 1px; display: flex; align-items: center; justify-content: center; }
.lay.on { width: 34px; background: #dcdfe1; border: 1px solid #b0b3b5; }
.status { margin-left: auto; display: flex; padding: 1px 18px 1px 0; color: #5b5d5f; }
.status > span { display: flex; align-items: center; padding: 2px 8px 0; border-left: 1px solid #a9acae; white-space: nowrap; }
.status .doc { padding: 2px 5px 0; gap: 4px; }
.pick { position: relative; width: 165px; }
.pick select { appearance: none; width: 100%; height: 100%; padding: 2px 8px 0; font: inherit; color: inherit; border: 1px solid #a4a7a9; border-radius: 0; background: linear-gradient(90deg, transparent 144px, #a4a7a9 144px, #a4a7a9 145px, transparent 145px) #fbfbfd; }
.pick .caret { position: absolute; right: 6px; top: 12px; }
</style>
